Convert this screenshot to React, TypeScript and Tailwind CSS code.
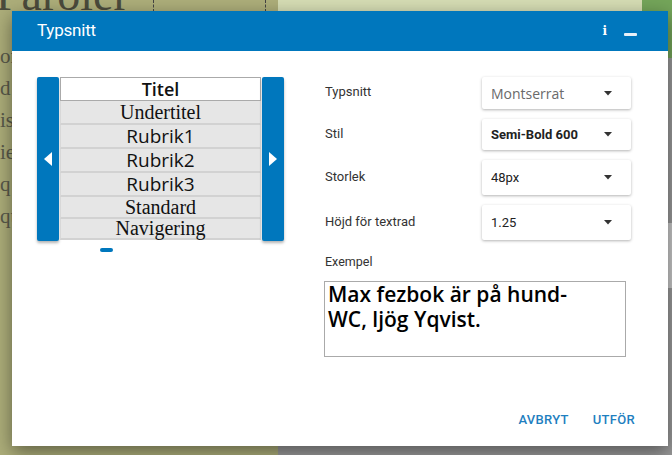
import { useState } from "react";

const styles = [
  { name: "Titel", font: "font-['Open_Sans',sans-serif] font-semibold text-[18px]", h: "h-[24px]" },
  { name: "Undertitel", font: "font-['Liberation_Serif',serif] text-[20px]", h: "h-[24px]" },
  { name: "Rubrik1", font: "font-['Open_Sans',sans-serif] text-[19px]", h: "h-[24px]" },
  { name: "Rubrik2", font: "font-['Open_Sans',sans-serif] text-[19px]", h: "h-[24px]" },
  { name: "Rubrik3", font: "font-['Open_Sans',sans-serif] text-[19px]", h: "h-[24px]" },
  { name: "Standard", font: "font-['Liberation_Serif',serif] text-[20px]", h: "h-[22px]" },
  { name: "Navigering", font: "font-['Liberation_Serif',serif] text-[20px]", h: "h-[21px]" },
];

const fields = [
  { label: "Typsnitt", value: "Montserrat", h: "h-[32px]", valueClass: "text-[#6a6a6a] font-['Open_Sans',sans-serif] text-[14px]" },
  { label: "Stil", value: "Semi-Bold 600", h: "h-[31px]", valueClass: "text-[#222] font-bold text-[13px]" },
  { label: "Storlek", value: "48px", h: "h-[35px]", valueClass: "text-[#222] text-[13px]" },
  { label: "Höjd för textrad", value: "1.25", h: "h-[35px]", valueClass: "text-[#222] text-[13px]" },
];

function Arrow({ dir }: { dir: "left" | "right" }) {
  return (
    <svg width="8" height="14" viewBox="0 0 8 14">
      {dir === "left" ? <polygon points="8,0 8,14 0,7" fill="white" /> : <polygon points="0,0 0,14 8,7" fill="white" />}
    </svg>
  );
}

function Select({ value, h, valueClass }: { value: string; h: string; valueClass: string }) {
  return (
    <div className={`w-[149px] ${h} bg-white flex items-center justify-between pl-[9px] pr-[19px] shadow-[0_1px_3px_rgba(0,0,0,0.3)] rounded-[2px]`}>
      <span className={valueClass}>{value}</span>
      <svg width="8" height="5" viewBox="0 0 8 5">
        <polygon points="0,0 8,0 4,4.5" fill="#333" />
      </svg>
    </div>
  );
}

export default function App() {
  const [selected] = useState(0);
  return (
    <div className="relative w-[672px] h-[455px] overflow-hidden font-['Roboto',sans-serif]">
      {/* page behind the dialog */}
      <div className="flex h-full">
        <div className="w-[278px] bg-[#adae7a] relative">
          <div className="flex h-[12px]">
            <div className="w-[153px] relative overflow-hidden">
              <span className="absolute left-[-4px] top-[-40px] font-['Liberation_Serif',serif] text-[46px] text-[#4b4b3c]">Paroler</span>
            </div>
            <div className="w-[113px] border-l border-r border-dashed border-[#444]" />
          </div>
          <div className="pt-[28px] font-['Liberation_Serif',serif] text-[21px] leading-[32px] text-[#5a5a4a]">
            <div>on</div>
            <div>d</div>
            <div>is</div>
            <div>ie</div>
            <div>q</div>
            <div>qu</div>
          </div>
        </div>
        <div className="flex-1 flex flex-col">
          <div className="h-[58px] bg-[#d6ddb4] flex justify-end">
            <div className="w-[30px] h-[58px] bg-[#74a55a]" />
          </div>
          <div className="flex-1 bg-[#9a9a9a] flex flex-col">
            <div className="h-[165px]" />
            <div className="h-[65px] bg-[#c9c9c9]" />
          </div>
        </div>
      </div>

      {/* dialog */}
      <div className="absolute left-[12px] top-[11px] w-[656px] h-[435px] bg-white shadow-[0_6px_18px_rgba(0,0,0,0.45)] flex flex-col">
        <div className="h-[40px] bg-[#0077bd] flex items-center justify-between pl-[25px] pr-[31px]">
          <span className="text-white text-[17px] tracking-[-0.2px]">Typsnitt</span>
          <div className="flex items-center gap-[17px]">
            <span className="text-white font-['DejaVu_Serif',serif] font-bold text-[12px] leading-none">i</span>
            <div className="w-[13px] h-[3px] bg-[#e8f0f8] rounded-[1px] mt-[7px]" />
          </div>
        </div>

        <div className="flex-1 flex pl-[25px] pt-[26px]">
          <div className="w-[288px] flex flex-col">
            <div className="flex">
              <div className="w-[22px] h-[164px] bg-[#0077bd] rounded-[2px] flex items-center justify-center shadow-[0_2px_3px_rgba(0,0,0,0.3)]">
                <Arrow dir="left" />
              </div>
              <div className="w-[201px] h-[164px] flex flex-col mx-px">
                {styles.map((s, i) => (
                  <div
                    key={s.name}
                    className={`${s.h} flex items-center justify-center text-[#111] ${
                      i === selected ? "bg-white border border-[#aaa]" : "bg-[#e6e6e6] border-b-2 border-[#d2d2d2] border-x border-x-[#d8d8d8]"
                    }`}
                  >
                    <span className={`${s.font} leading-[19px]`}>{s.name}</span>
                  </div>
                ))}
              </div>
              <div className="w-[22px] h-[164px] bg-[#0077bd] rounded-[2px] flex items-center justify-center shadow-[0_2px_3px_rgba(0,0,0,0.3)]">
                <Arrow dir="right" />
              </div>
            </div>
            <div className="mt-[7px] ml-[63px] w-[13px] h-[4px] rounded-full bg-[#0077bd]" />
          </div>

          <div className="flex flex-col">
            <div className="flex flex-col gap-[10px]">
              {fields.map((f) => (
                <div key={f.label} className="flex items-center">
                  <span className="w-[157px] text-[13px] text-[#333] -mt-[2px]">{f.label}</span>
                  <Select value={f.value} h={f.h} valueClass={f.valueClass} />
                </div>
              ))}
            </div>
            <div className="mt-[13px] text-[12.5px] text-[#333]">Exempel</div>
            <div className="mt-[9px] -ml-px w-[302px] h-[76px] border border-[#aaa] pl-[3px] pt-0 font-['Open_Sans',sans-serif] font-semibold text-[21px] leading-[25px] text-black">
              Max fezbok är på hund-
              <br />
              WC, ljög Yqvist.
            </div>
          </div>
        </div>

        <div className="flex justify-end gap-[24px] pr-[33px] pb-[17px] text-[13px] font-medium text-[#1f7fc0] tracking-[0.3px]">
          <span>AVBRYT</span>
          <span>UTFÖR</span>
        </div>
      </div>
    </div>
  );
}
